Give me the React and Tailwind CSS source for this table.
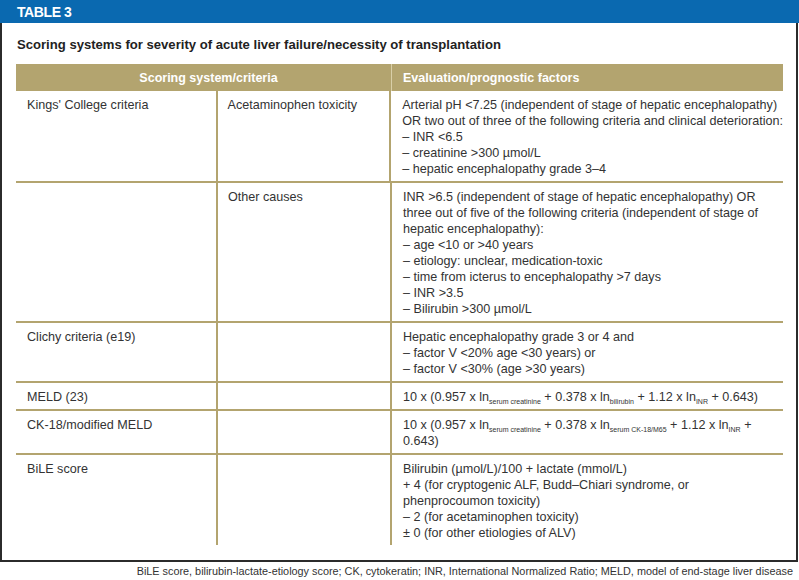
import React from 'react';

const rows = [
  {
    system: "Kings' College criteria",
    sub: 'Acetaminophen toxicity',
    lines: [
      'Arterial pH <7.25 (independent of stage of hepatic encephalopathy)',
      'OR two out of three of the following criteria and clinical deterioration:',
      '– INR <6.5',
      '– creatinine >300 µmol/L',
      '– hepatic encephalopathy grade 3–4',
    ],
  },
  {
    system: '',
    sub: 'Other causes',
    lines: [
      'INR >6.5 (independent of stage of hepatic encephalopathy) OR',
      'three out of five of the following criteria (independent of stage of',
      'hepatic encephalopathy):',
      '– age <10 or >40 years',
      '– etiology: unclear, medication-toxic',
      '– time from icterus to encephalopathy >7 days',
      '– INR >3.5',
      '– Bilirubin >300 µmol/L',
    ],
  },
  {
    system: 'Clichy criteria (e19)',
    sub: '',
    lines: [
      'Hepatic encephalopathy grade 3 or 4 and',
      '– factor V <20% age <30 years) or',
      '– factor V <30% (age >30 years)',
    ],
  },
  {
    system: 'MELD (23)',
    sub: '',
    lines: [
      <>
        10 x (0.957 x ln<Sub>serum creatinine</Sub> + 0.378 x ln<Sub>bilirubin</Sub> + 1.12 x ln<Sub>INR</Sub> + 0.643)
      </>,
    ],
  },
  {
    system: 'CK-18/modified MELD',
    sub: '',
    lines: [
      <>
        10 x (0.957 x ln<Sub>serum creatinine</Sub> + 0.378 x ln<Sub>serum CK-18/M65</Sub> + 1.12 x ln<Sub>INR</Sub> +
      </>,
      '0.643)',
    ],
  },
  {
    system: 'BiLE score',
    sub: '',
    lines: [
      'Bilirubin (µmol/L)/100 + lactate (mmol/L)',
      '+ 4 (for cryptogenic ALF, Budd–Chiari syndrome, or',
      'phenprocoumon toxicity)',
      '– 2 (for acetaminophen toxicity)',
      '± 0 (for other etiologies of ALV)',
    ],
  },
];

function Sub({ children }) {
  return <span className="relative top-[3px] text-[7px] leading-none">{children}</span>;
}

export default function App() {
  return (
    <div className="w-[799px] h-[580px] bg-white font-['Liberation_Sans',Arial,sans-serif] text-[#333]">
      <div className="h-[23px] bg-[#0a69b0] pl-[17px] flex items-center">
        <span className="text-white font-bold text-[14px] tracking-[-0.4px] leading-none pt-[1px]">TABLE 3</span>
      </div>

      <div className="w-[798px] h-[539px] border-2 border-t-0 border-[#2b2b2b] pt-[14px]">
        <div className="pl-[15px] text-[13.1px] leading-[16px] font-bold text-[#222]">
          Scoring systems for severity of acute liver failure/necessity of transplantation
        </div>

        <div className="ml-[14px] mt-[11px] w-[767px] text-[12.6px] leading-[16px]">
          <div className="flex h-[27px] bg-[#b3a46f] text-white font-bold text-[12.5px] items-center">
            <div className="w-[375px] text-center pl-[10px]">Scoring system/criteria</div>
            <div className="w-[1px] h-full bg-[#d9cfa8]" />
            <div className="flex-1 pl-[11px]">Evaluation/prognostic factors</div>
          </div>

          {rows.map((row, i) => (
            <div key={i} className={`flex ${i > 0 ? 'border-t-2 border-[#b3a46f]' : ''}`}>
              <div className="w-[202px] border-r-2 border-[#b3a46f] pl-[11px] pt-[6px] pb-[4px]">{row.system}</div>
              <div className="w-[174px] border-r-2 border-[#b3a46f] pl-[10px] pt-[6px] pb-[4px]">{row.sub}</div>
              <div className="flex-1 pl-[11px] pt-[6px] pb-[4px]">
                {row.lines.map((line, j) => (
                  <div key={j} className="whitespace-nowrap h-[16px]">{line}</div>
                ))}
              </div>
            </div>
          ))}
        </div>
      </div>

      <div className="pr-[6px] pt-[3px] text-right text-[10.85px] leading-[13px] text-[#333]">
        BiLE score, bilirubin-lactate-etiology score; CK, cytokeratin; INR, International Normalized Ratio; MELD, model of end-stage liver disease
      </div>
    </div>
  );
}
